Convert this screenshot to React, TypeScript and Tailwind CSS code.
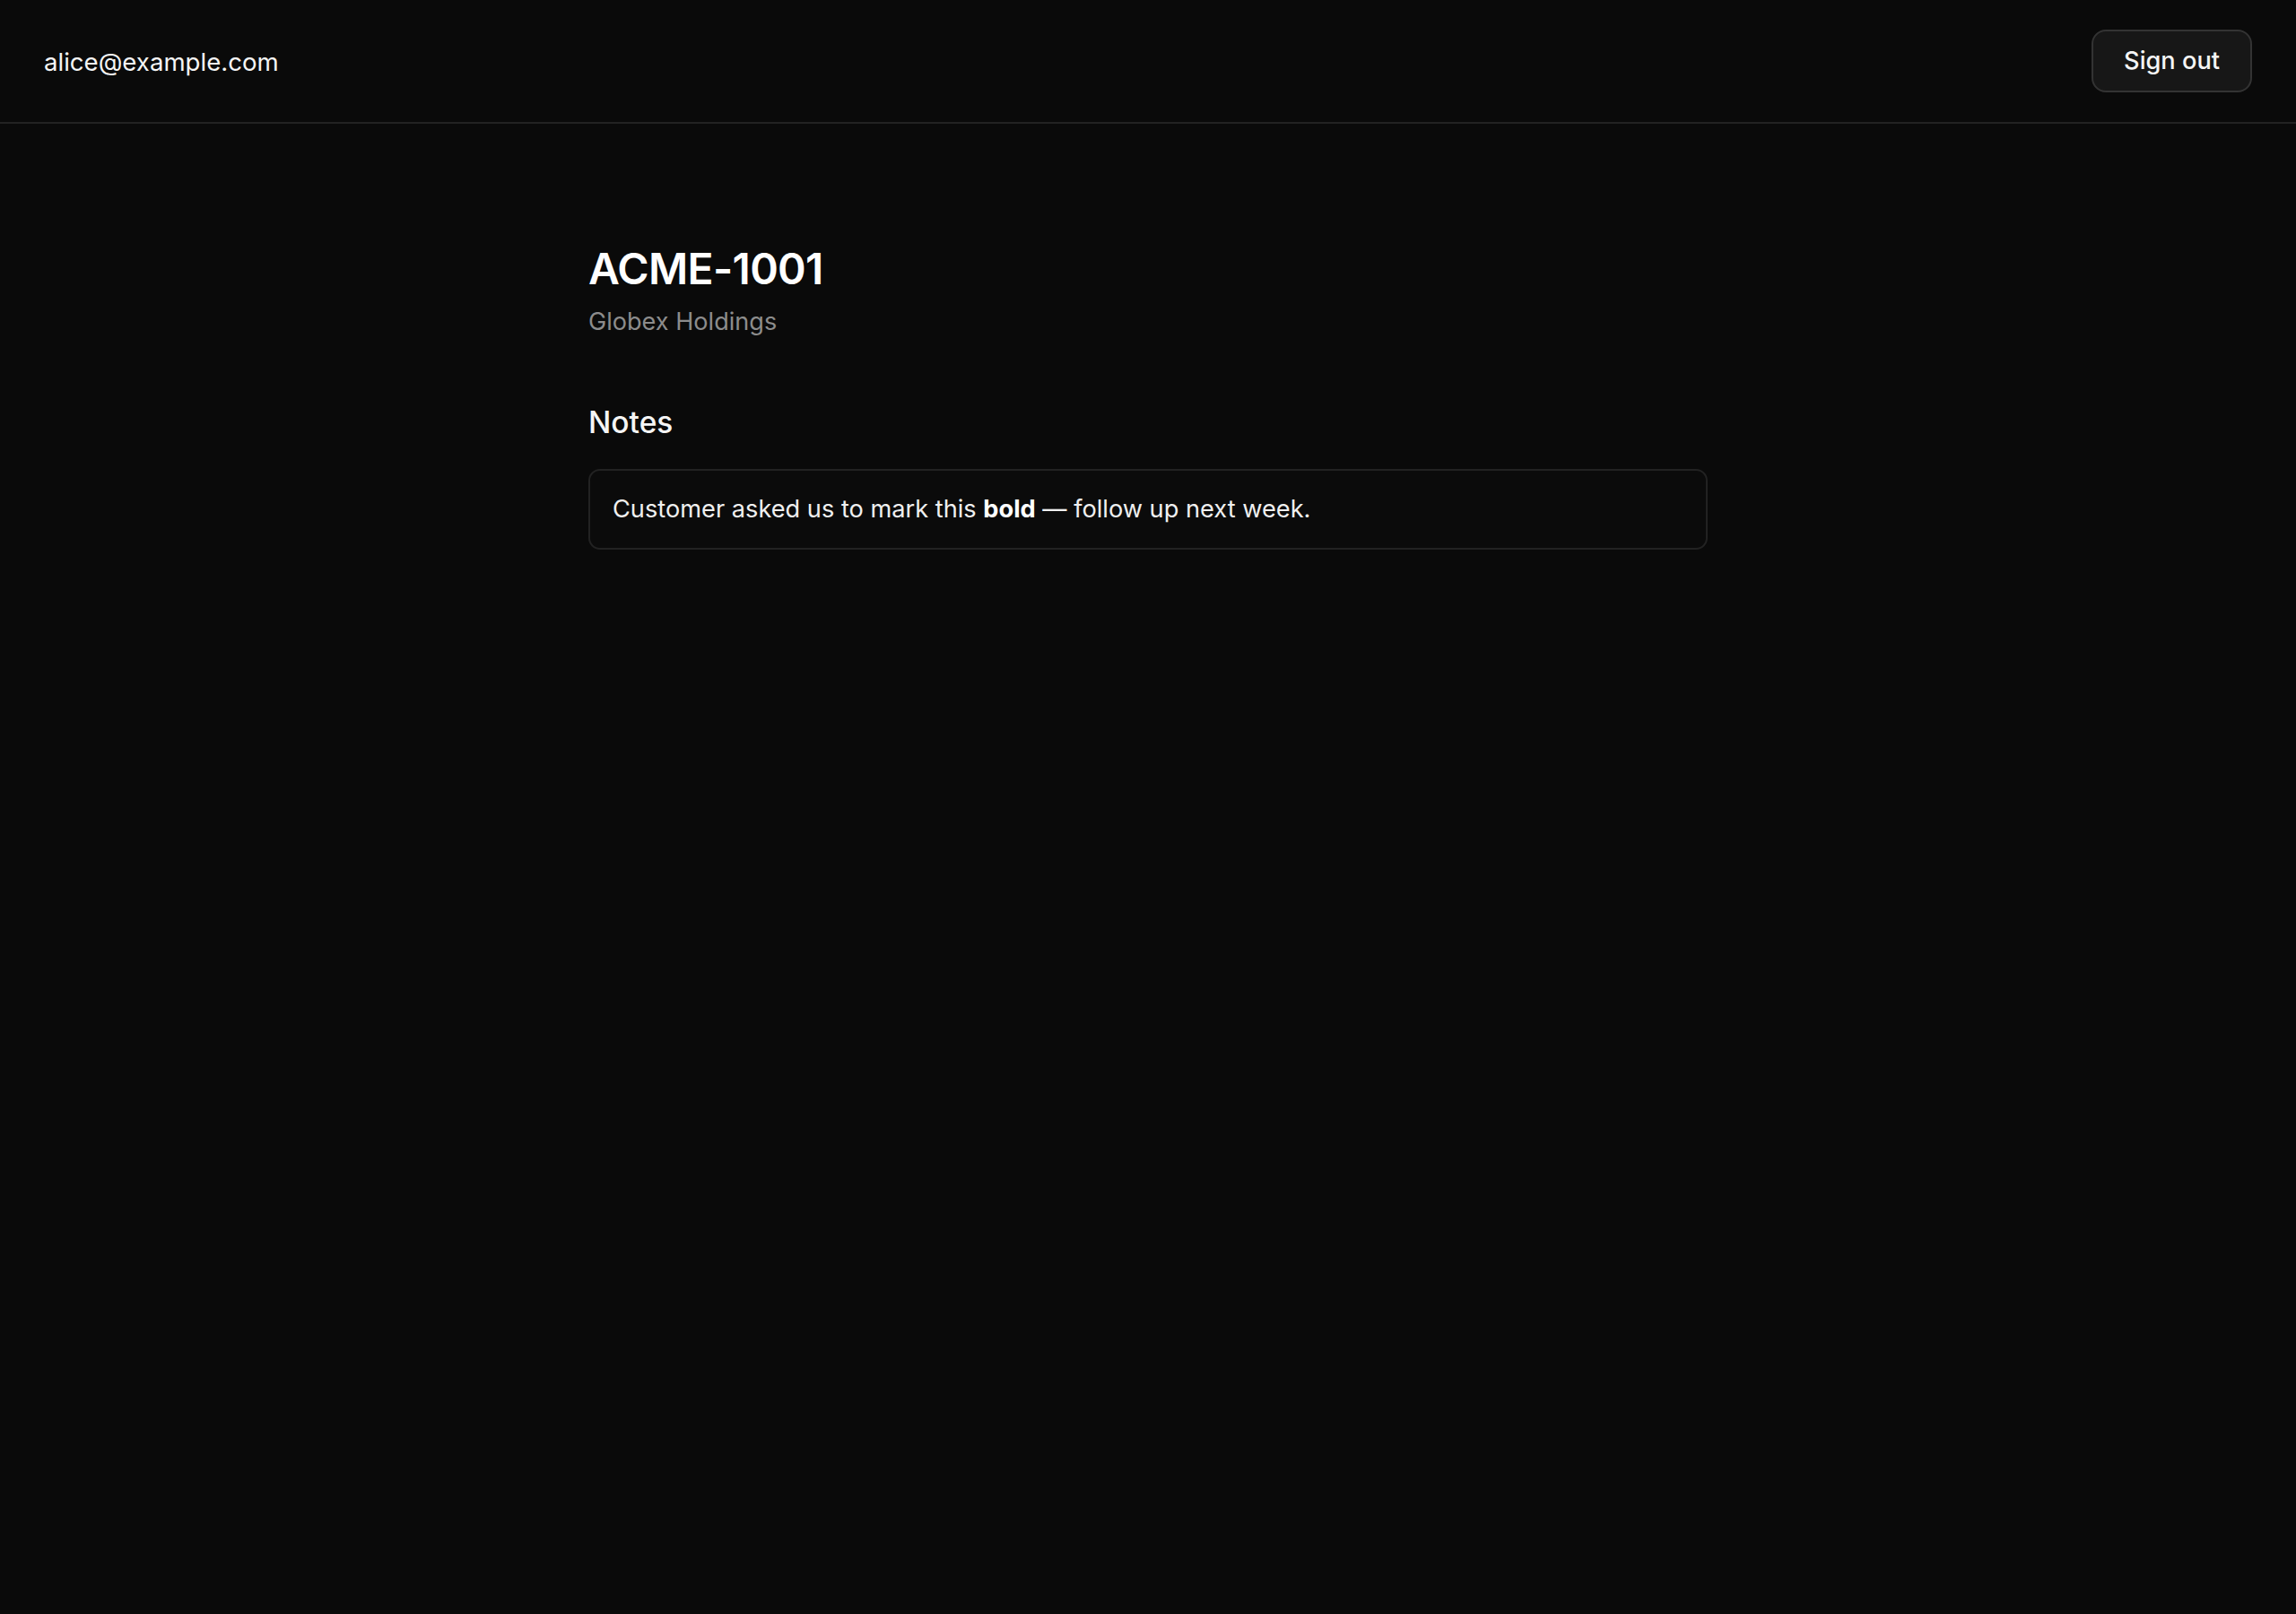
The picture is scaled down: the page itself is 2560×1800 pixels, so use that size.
import React from "react";

export default function App() {
  return (
    <div
      className="min-h-screen bg-[#0a0a0a] text-[#ededed]"
      style={{ fontFamily: "Inter, 'Noto Sans', sans-serif" }}
    >
      <header className="h-[138px] border-b-2 border-[#222222] flex items-center justify-between pl-[49px] pr-[49px]">
        <span className="text-[27.6px] leading-[40px] pt-[2px] text-[#f5f5f5]">alice@example.com</span>
        <button className="h-[70px] px-[34px] border-2 border-[#333333] bg-[#171717] rounded-[16px] text-[27.2px] leading-[40px] font-medium text-[#f5f5f5]">
          Sign out
        </button>
      </header>
      <main className="w-[1248px] mx-auto pt-[133px]">
        <h1 className="text-[48px] leading-[58px] font-semibold text-white tracking-[-0.7px]">ACME-1001</h1>
        <p className="mt-[10px] text-[27.1px] leading-[40px] text-[#8c8c8c]">Globex Holdings</p>
        <h2 className="mt-[72px] text-[33.5px] leading-[40px] font-medium text-[#f5f5f5]">Notes</h2>
        <div className="mt-[32px] border-2 border-[#222222] rounded-[13px] px-[25px] py-[23px] bg-[#0b0b0b]">
          <p className="text-[27.2px] leading-[40px] text-[#f0f0f0]">
            Customer asked us to mark this <strong className="font-bold text-white">bold</strong> — follow up next week.
          </p>
        </div>
      </main>
    </div>
  );
}
